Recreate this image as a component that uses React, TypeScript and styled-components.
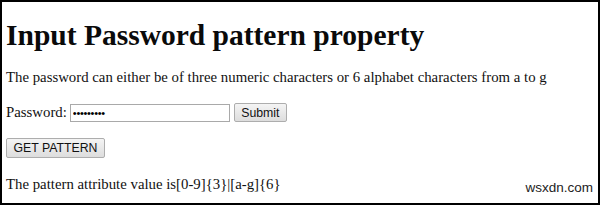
import React from "react";
import styled, { createGlobalStyle } from "styled-components";

const Global = createGlobalStyle`
  html, body { margin: 0; padding: 0; background: #fff; }
  body { font-family: "Liberation Serif", "Times New Roman", serif; color: #000; }
`;

const Frame = styled.div`
  position: relative;
  box-sizing: border-box;
  width: 600px;
  height: 205px;
  border: 2px solid #000;
  padding: 0 0 0 4px;
  overflow: hidden;
`;

const Title = styled.h1`
  font-size: 29.5px;
  font-weight: bold;
  margin: 16px 0 0 0;
  line-height: 34px;
  color: #0a0a0a;
`;

const Text = styled.p<{ $top: number }>`
  font-size: 14.8px;
  line-height: 17px;
  margin: ${(p) => p.$top}px 0 0 0;
  color: #111;
`;

const Row = styled.div`
  display: flex;
  align-items: center;
  height: 19px;
  margin-top: 17px;
  font-size: 14.8px;
  color: #111;
`;

const Label = styled.span`
  margin-right: 3px;
`;

const PasswordInput = styled.input`
  box-sizing: border-box;
  width: 160px;
  height: 18px;
  border: 1px solid #a9a9a9;
  padding: 0 2px;
  font-size: 11px;
  letter-spacing: -0.3px;
  outline: none;
  margin: 0 4px 0 0;
`;

const Btn = styled.button<{ $w: number; $h: number }>`
  box-sizing: border-box;
  width: ${(p) => p.$w}px;
  height: ${(p) => p.$h}px;
  border: 1px solid #adadad;
  border-radius: 2px;
  background: linear-gradient(#f4f4f4, #dddddd);
  font-family: "Liberation Sans", Arial, sans-serif;
  font-size: 12.3px;
  color: #111;
  padding: 0;
  margin: 0;
`;

const BtnRow = styled.div`
  margin-top: 16px;
  display: flex;
`;

const Watermark = styled.div`
  position: absolute;
  right: 5px;
  bottom: 8px;
  font-family: "Liberation Sans", Arial, sans-serif;
  font-size: 13.5px;
  color: #222;
`;

export default function App() {
  return (
    <>
      <Global />
      <Frame>
        <Title>Input Password pattern property</Title>
        <Text $top={17}>
          The password can either be of three numeric characters or 6 alphabet characters from a to g
        </Text>
        <Row>
          <Label>Password:</Label>
          <PasswordInput type="password" defaultValue="abcdefghi" />
          <Btn $w={53} $h={19}>Submit</Btn>
        </Row>
        <BtnRow>
          <Btn $w={99} $h={20}>GET PATTERN</Btn>
        </BtnRow>
        <Text $top={18}>The pattern attribute value is[0-9]{"{3}"}|[a-g]{"{6}"}</Text>
        <Watermark>wsxdn.com</Watermark>
      </Frame>
    </>
  );
}
